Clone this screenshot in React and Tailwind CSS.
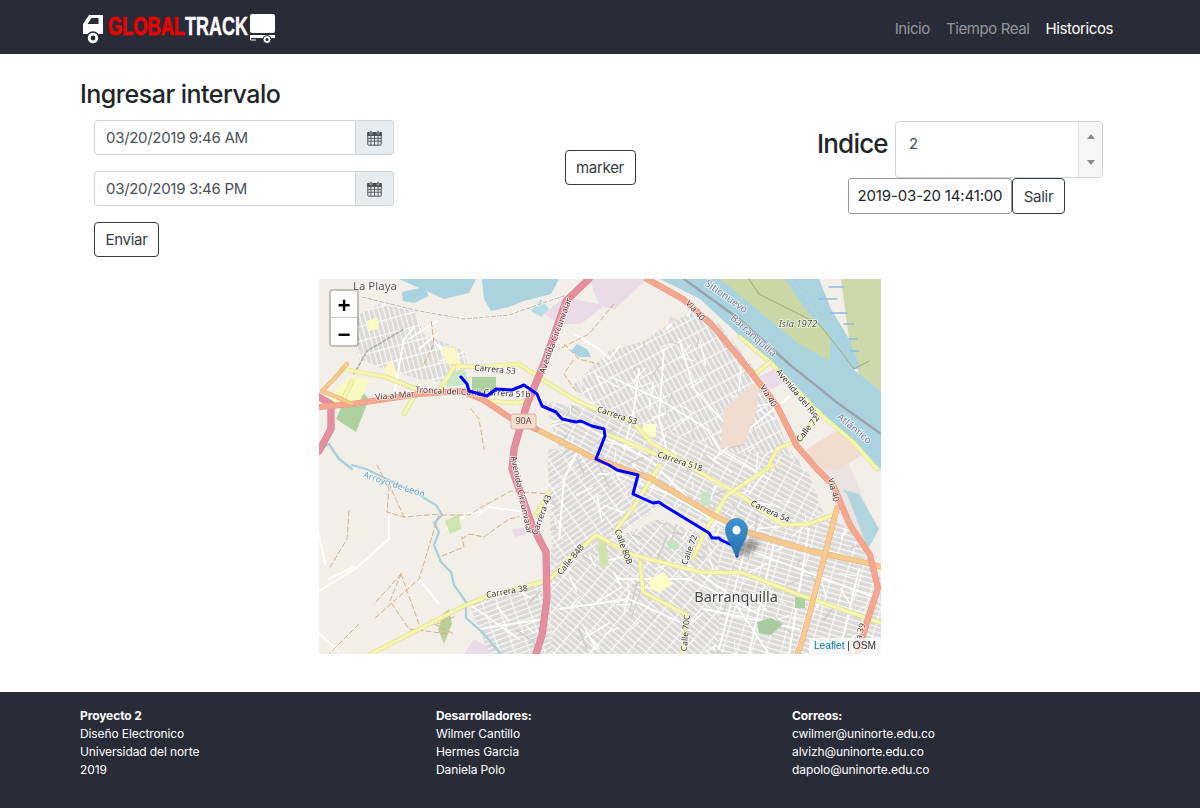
const F = { fontFamily: 'Inter, "Liberation Sans", sans-serif' };

const Line = ({ d, w, c, dash, op }) => (
  <path d={d} fill="none" stroke={c} strokeWidth={w} strokeLinecap="round" strokeLinejoin="round" strokeDasharray={dash} opacity={op} />
);
const Cased = ({ d, w, c, edge }) => (
  <g>
    <Line d={d} w={w + 1.2} c={edge} />
    <Line d={d} w={w} c={c} />
  </g>
);

const districts = [
  ["252,108 290,72 325,62 345,48 378,30 400,45 432,85 445,110 470,170 490,195 440,190 420,175 340,150 290,135", "p60"],
  ["225,122 290,132 340,150 420,175 470,175 490,195 505,235 470,250 420,260 350,230 290,195 240,170", "p28"],
  ["395,250 470,250 510,235 530,250 552,285 562,300 562,375 478,375 400,375 385,300", "p14"],
  ["232,270 290,262 340,240 400,260 400,375 232,375", "p40"],
  ["150,325 175,315 230,300 232,375 170,375", "p-20"],
  ["228,170 260,170 300,200 345,225 290,262 240,290 232,260", "p-35"],
  ["30,40 60,25 95,32 105,55 145,72 150,92 135,105 100,100 70,92 40,80", "p75"],
];

const water = "341,0 381,20 421,57 451,83 501,133 562,190 562,112 534,90 511,57 488,20 471,0";

const route = "M142 98 L148 105 L150 112 L168 117 L177 110 L193 111 L205 106 L218 115 L223 127 L237 133 L243 140 L257 143 L262 142 L273 147 L285 150 L286 157 L277 180 L290 186 L298 191 L319 196 L314 215 L334 224 L340 223 L344 226 L390 254 L393 259 L400 259 L402 261 L417 268 L418 277";

const dashes = [
  "M58 186 L70 210 L68 233 L85 238 L120 235 L100 300 L55 340",
  "M30 232 L28 260 L10 290",
  "M123 236 L150 236 L163 228 L192 212 L230 215",
  "M85 238 L70 205",
  "M143 260 L150 255 L165 258 L190 240 L200 238",
  "M123 277 L145 268 L143 258",
  "M82 295 L55 325 M82 295 L100 345 M82 295 L71 322 L90 350 L130 355",
  "M40 345 L20 365 L10 375",
  "M115 345 L135 355 M135 338 L118 345",
  "M257 112 L245 95 L255 80 M245 65 L260 80 L280 85",
  "M295 25 L270 55 L240 70",
  "M152 130 L160 140 L165 170",
  "M105 85 L115 65 L112 40",
];

const whites = [
  "M43 18 L100 32 L145 40 L190 36 L247 16",
  "M0 312 L36 290 L70 260 L70 236 M35 288 L10 300",
  "M160 236 L170 228 L205 233",
  "M128 250 L150 234 L165 232",
  "M120 65 L135 85 M115 62 L125 75 L140 90",
  "M75 115 L85 60 L95 48",
  "M90 60 L118 42 M100 70 L118 55",
  "M0 255 L6 285",
  "M120 325 L100 300 M0 355 L20 372",
  "M255 55 L280 70 L290 80 L300 68",
  "M292 98 L340 120 L388 150 L400 170 L450 200",
  "M320 90 L315 130 L305 170 M345 70 L340 140 L350 180",
  "M360 60 L375 110 L420 160",
  "M230 130 L270 150 L330 180 L390 240",
  "M298 195 L350 215 L420 255",
  "M260 170 L245 200 L240 260",
  "M360 280 L410 315 L450 375",
  "M300 300 L370 300 L440 335",
  "M395 180 L430 150 L470 118",
  "M448 190 L430 215 M490 250 L470 375 M540 290 L520 375",
  "M400 260 L560 320 M385 330 L480 350 M240 330 L310 320 L365 345",
  "M430 255 L400 370 M455 265 L430 375",
  "M150 325 L200 360 M160 350 L225 340",
];

const yellows = [
  "M23 90 L67 98 L97 110",
  "M137 87 L160 88 L200 85 L227 103 L260 123 L281 132 L314 143 L331 163 L364 183 L394 201 L421 216 L464 246 L490 245 L514 236",
  "M120 112 L135 88",
  "M288 155 L341 177 L381 187",
  "M341 186 L314 229 L298 249 L308 283",
  "M454 186 L408 216 L388 249 L374 279",
  "M501 133 L481 160 L458 170 L448 190",
  "M421 58 L451 83 L501 135 L534 163 L558 190",
  "M436 95 L451 83",
  "M281 259 L314 276 L381 293 L424 294 L481 316 L562 344",
  "M321 283 L324 313 L368 336 L363 376",
  "M50 376 L147 326 L167 318 L230 301 L247 283 L277 256 L290 263",
  "M217 236 L230 213",
  "M168 122 L200 124 L215 118",
  "M33 102 L22 125 M98 112 L85 135",
];

const labels = [
  [176, 91, "Carrera 53", 5, 8.5, "#333"], [76, 117, "Via al Mar", -5, 8.5, "#533"], [132, 113, "Troncal del Caribe", 3, 8.5, "#533"],
  [188, 115, "Carrera 51b", 3, 8.5, "#333"], [237, 57, "Avenida Circunvalar", -70, 8.5, "#533"], [202, 216, "Avenida Circunvalar", 78, 8.5, "#533"],
  [298, 137, "Carrera 53", 18, 8.5, "#333"], [361, 183, "Carrera 518", 18, 8.5, "#333"], [376, 32, "Via 40", 48, 8.5, "#533"],
  [449, 117, "Via 40", 58, 8.5, "#533"], [478, 115, "Avenida del Rio", 50, 8.5, "#333"], [489, 150, "Calle 72", -52, 8.5, "#333"],
  [223, 236, "Carrera 43", -70, 8.5, "#333"], [252, 281, "Calle 84B", -50, 8.5, "#333"], [188, 313, "Carrera 38", -10, 8.5, "#333"],
  [451, 233, "Carrera 54", 25, 8.5, "#333"], [514, 211, "Via 40", 75, 8.5, "#533"], [371, 271, "Calle 72", -70, 8.5, "#333"],
  [304, 268, "Calle 80B", 70, 8.5, "#333"], [367, 354, "Calle 70C", -85, 8.5, "#333"], [541, 356, "Via 39", -75, 8.5, "#533"],
];

// Deterministic street noise that breaks up the regular block patterns.
let seed = 1234;
const rnd = () => {
  seed = (seed * 16807) % 2147483647;
  return seed / 2147483647;
};
const noise = Array.from({ length: 320 }, () => {
  const x = 140 + rnd() * 422;
  const y = 20 + rnd() * 355;
  const a = rnd() * Math.PI;
  const l = 6 + rnd() * 24;
  return {
    d: `M${x.toFixed(1)} ${y.toFixed(1)} L${(x + Math.cos(a) * l).toFixed(1)} ${(y + Math.sin(a) * l).toFixed(1)}`,
    c: rnd() > 0.72 ? "#cfcdca" : "#ffffff",
    w: 0.8 + rnd() * 0.9,
  };
});

function MapSvg() {
  return (
    <svg width="562" height="375" viewBox="0 0 562 375" className="block">
      <defs>
        {[["p60", 62], ["p28", 28], ["p14", 16], ["p40", 40], ["p-20", -20], ["p-35", -35], ["p75", 75]].map(([id, a]) => (
          <pattern key={id} id={id} width="14" height="5" patternUnits="userSpaceOnUse" patternTransform={`rotate(${a})`}>
            <rect width="14" height="5" fill="#dcdad7" />
            <rect y="0" width="14" height="1.2" fill="#fafafa" />
            <rect x="0" width="1.2" height="5" fill="#fafafa" />
          </pattern>
        ))}
        <clipPath id="city">
          {districts.map(([p, id]) => <polygon key={id} points={p} />)}
        </clipPath>
        <filter id="soft" x="0" y="0" width="100%" height="100%"><feGaussianBlur stdDeviation="0.4" /></filter>
        <filter id="shadow" x="-50%" y="-50%" width="200%" height="200%"><feGaussianBlur stdDeviation="2.5" /></filter>
        <linearGradient id="pin" x1="0" x2="0" y1="0" y2="1">
          <stop offset="0" stopColor="#3f93d3" />
          <stop offset="1" stopColor="#2272ad" />
        </linearGradient>
      </defs>
      <g filter="url(#soft)">
        <rect width="562" height="375" fill="#f2efe9" />
        <path d="M225 35 L245 18 L280 25 L296 0 L328 0 L281 30 L262 45 L240 45 Z" fill="#ebdbe8" />
        <path d="M270 0 L328 0 L296 30 L281 28 Z" fill="#ebdbe8" />
        <path d="M351 37 L371 47 L358 58 L348 50 Z M346 60 L365 70 L358 80 L345 70 Z" fill="#ebdbe8" />
        <path d="M500 190 L530 185 L550 232 L534 240 L515 200 Z" fill="#ebe3e2" />
        <path d="M145 375 L155 360 L175 370 L178 375 Z M193 250 L208 248 L208 255 L196 258 Z" fill="#ebdbe8" />
        <path d="M80 0 L157 0 L150 14 L125 20 L112 14 L98 8 Z M163 0 L240 0 L232 15 L205 22 L190 28 L172 32 L165 20 Z M83 13 L105 8 L110 17 L95 24 L84 22 Z" fill="#aad3df" />
        <path d="M252 72 L258 65 L268 70 L272 78 L260 78 Z" fill="#aad3df" />
        <path d="M212 32 L222 20 L230 30 L222 38 Z" fill="#b4dde4" />

        <polygon points="471,0 488,20 511,57 534,90 562,112 562,0" fill="#f2efe9" />
        <path d="M522 0 L562 0 L562 112 L540 95 L530 60 Z" fill="#cdd9ab" />
        <polygon points={water} fill="#aad3df" />
        <path d="M401 0 L466 0 L490 35 L511 57 L511 82 L480 65 L441 33 Z" fill="#c9d8a6" />
        <path d="M471 0 L500 0 L512 30 L530 60 L542 90 L534 90 L511 57 L488 20 Z" fill="#aad3df" />
        <Line d="M430 0 L440 15 L470 30 L500 45 L520 70 L535 90 L550 82" w={1} c="#9aaa77" />
        <Line d="M510 8 L525 8 M500 20 L518 20 M512 34 L528 34 M525 45 L535 45 M530 60 L538 60 M532 72 L540 72" w={1.3} c="#88bfe0" />
        <Line d="M365 0 L420 40 L470 85 L520 125 L562 155" w={2.4} c="#9ba3ad" />
        <path d="M514 208 L540 215 L560 250 L548 272 L535 240 L520 225 Z" fill="#aad3df" opacity="0.9" />
        <path d="M508 195 L528 215 L546 262 L532 255 L515 225 Z" fill="#ebe3e2" />

        {districts.map(([p, id]) => <polygon key={id} points={p} fill={`url(#${id})`} />)}
        <g clipPath="url(#city)">
          {noise.map((n, i) => <Line key={i} d={n.d} w={n.w} c={n.c} />)}
        </g>
        {whites.map((d, i) => <Line key={i} d={d} w={i < 4 ? 2.2 : 1.8} c="#ffffff" />)}
        <Line d="M43 18 L100 32 L145 40 L190 36 L247 16" w={1.2} c="#bdbdbd" dash="4 2" />
        <Line d="M35 95 L48 72 L85 50" w={1.5} c="#aaa" dash="3 2" />

        <path d="M401 170 L405 130 L440 100 L438 130 L425 165 Z" fill="#f1dcd0" />
        <path d="M488 170 L520 150 L545 175 L520 190 L495 190 Z" fill="#f1dcd0" />
        <path d="M436 100 L455 90 L470 100 L450 112 Z" fill="#ebdbe8" />
        <path d="M33 103 L50 120 L37 153 L17 140 Z" fill="#add19e" />
        <rect x="153" y="98" width="24" height="15" fill="#add19e" />
        <path d="M10 118 L30 98 L50 100 L40 125 L15 130 Z" fill="#f7fabf" />
        <path d="M125 95 L145 90 L150 105 L128 108 Z" fill="#c7e7c5" />
        <path d="M122 70 L135 68 L142 85 L128 85 Z M65 90 L72 82 L78 95 L68 100 Z M48 42 L58 38 L60 50 L50 52 Z" fill="#fbf8c3" />
        <path d="M438 343 L452 339 L464 345 L452 356 L440 354 Z" fill="#a9c9a0" />
        <rect x="476" y="318" width="10" height="11" fill="#add19e" />
        <path d="M331 300 L345 293 L354 305 L340 313 L331 310 Z" fill="#fdfbc5" />
        <rect x="324" y="145" width="13" height="13" fill="#fdfbc5" />
        <path d="M278 258 L287 262 L290 287 L281 287 Z M126 242 L140 235 L142 250 L131 255 Z" fill="#cfe3ae" />
        <path d="M445 310 L450 310 L450 320 L445 320 Z M381 215 L390 212 L392 225 L383 228 Z M347 262 L358 262 L360 270 L350 270 Z" fill="#c9e4c2" />
        <path d="M124 335 L130 330 L133 345 L125 365 L119 350 Z" fill="#bcd09a" />

        <Line d="M0 170 L10 165 L20 180 L33 190" w={2.4} c="#a9cfdc" />
        <Line d="M33 186 L47 190 L100 216 L117 226 L123 236 L115 244 L120 253 L115 266 L122 283 L132 293 L135 306 L147 323 L147 339 L163 353 L183 376" w={2.2} c="#a9cfdc" />

        {dashes.map((d, i) => <Line key={i} d={d} w={1} c="#d3b184" dash="5 3" />)}

        {yellows.map((d, i) => <Cased key={i} d={d} w={3.4} c="#f5f7ae" edge="#dedd93" />)}

        <Cased d="M270 0 L247 22 L225 85 L208 125 L195 170 L193 190 L213 246 L227 273 L228 319 L223 356 L217 375" w={6} c="#e58e9e" edge="#d4808f" />
        <Cased d="M0 172 L12 150 L12 125 L0 118" w={6} c="#e58e9e" edge="#d4808f" />
        <Cased d="M217 150 L277 180 L331 199 L394 236 L431 254 L488 271 L548 284 L562 288" w={4.5} c="#f7c98f" edge="#e9b474" />
        <Cased d="M518 229 L504 283 L484 359 L478 376" w={4.5} c="#f8cb95" edge="#e9b474" />
        <Cased d="M0 128 L33 125 L100 115 L143 112 L163 120 L193 140 L217 150" w={5} c="#f5a68e" edge="#e79a82" />
        <Cased d="M33 125 L18 118 L3 112 M3 112 L15 100 L28 85" w={3} c="#f7c98f" edge="#e9b474" />
        <Cased d="M328 0 L364 20 L394 47 L424 83 L458 127 L478 167 L498 190 L514 206 L531 246 L551 276 L559 309 L548 343 L538 376" w={5} c="#f5a68e" edge="#e79a82" />

        <g fontFamily='"Noto Sans", sans-serif' stroke="#ffffff" strokeOpacity="0.75" strokeWidth="1.6" paintOrder="stroke">
          {labels.map(([x, y, t, a, s, c], i) => (
            <text key={i} x={x} y={y} fontSize={s} fill={c} textAnchor="middle" dominantBaseline="middle" transform={`rotate(${a} ${x} ${y})`}>{t}</text>
          ))}
          <text x="56" y="8" fontSize="11.5" fill="#555" textAnchor="middle" dominantBaseline="middle">La Playa</text>
          <text x="417" y="319" fontSize="14.5" fill="#444" textAnchor="middle" dominantBaseline="middle">Barranquilla</text>
          <text x="407" y="18" fontSize="10" fill="#7c7e94" textAnchor="middle" dominantBaseline="middle" transform="rotate(35 407 18)">Sitionuevo</text>
          <text x="434" y="57" fontSize="10" fill="#7c7e94" textAnchor="middle" dominantBaseline="middle" transform="rotate(42 434 57)">Barranquilla</text>
          <text x="535" y="150" fontSize="10" fill="#7c7e94" textAnchor="middle" dominantBaseline="middle" transform="rotate(40 535 150)">Atlántico</text>
          <text x="479" y="45" fontSize="9.5" fontStyle="italic" fill="#4a5a4a" textAnchor="middle" dominantBaseline="middle">Isla 1972</text>
          <text x="75" y="206" fontSize="9" fill="#6a9fc4" textAnchor="middle" dominantBaseline="middle" transform="rotate(18 75 206)">Arroyo de León</text>
        </g>
        <rect x="192" y="135" width="25" height="15" rx="2" fill="#f5dccf" stroke="#d8b4a3" />
        <text x="204.5" y="143" fontSize="9" fontFamily='"Noto Sans", sans-serif' fill="#5c4a44" textAnchor="middle" dominantBaseline="middle">90A</text>
      </g>

      <path d={route} fill="none" stroke="#0000ff" strokeWidth="3" strokeLinejoin="round" strokeLinecap="round" />

      <ellipse cx="428" cy="268" rx="12" ry="7" fill="#000" opacity="0.35" filter="url(#shadow)" transform="rotate(-25 428 268)" />
      <g transform="translate(406 239) scale(0.92 0.97)">
        <path d="M12.5 0.5 C5.6 0.5 0.5 5.9 0.5 12.5 C0.5 20 9.5 32 12.5 41 C15.5 32 24.5 20 24.5 12.5 C24.5 5.9 19.4 0.5 12.5 0.5 Z" fill="url(#pin)" stroke="#2a6f9f" strokeWidth="0.6" />
        <circle cx="12.5" cy="12.5" r="4.4" fill="#fff" />
      </g>
    </svg>
  );
}

function Calendar() {
  return (
    <svg width="15" height="16" viewBox="0 0 15 16" fill="none" stroke="#495057" strokeWidth="1">
      <rect x="0.8" y="2.5" width="13.4" height="12.7" rx="1" />
      <rect x="0.8" y="2.5" width="13.4" height="3" fill="#495057" />
      <path d="M0.8 8.4H14.2M0.8 11.2H14.2M3.9 5.5V15M7.5 5.5V15M11.1 5.5V15" strokeWidth="0.9" />
      <rect x="3" y="0.8" width="2" height="3.4" rx="0.8" fill="#495057" stroke="#e9ecef" strokeWidth="0.5" />
      <rect x="10" y="0.8" width="2" height="3.4" rx="0.8" fill="#495057" stroke="#e9ecef" strokeWidth="0.5" />
    </svg>
  );
}

function DateField({ value }) {
  return (
    <div className="flex h-[35px] w-[300px]">
      <div className="flex flex-1 items-center rounded-l border border-[#ced4da] bg-white pl-[11px] pt-[2px] text-[15px] tracking-[-0.3px] text-[#495057]">{value}</div>
      <div className="flex w-[38px] items-center justify-center rounded-r border border-l-0 border-[#ced4da] bg-[#e9ecef]">
        <Calendar />
      </div>
    </div>
  );
}

function Btn({ children, className = "" }) {
  return (
    <button className={`flex items-center justify-center rounded border border-[#343a40] bg-white pt-[2px] text-[15px] tracking-[-0.3px] text-[#343a40] ${className}`}>
      {children}
    </button>
  );
}

function Logo() {
  return (
    <svg width="194" height="34" viewBox="0 0 194 34" className="block">
      <path d="M6 5 H20 V24 H0 V14 Z" fill="#fff" />
      <path d="M8.5 8 L15.5 8 L15.5 14 L4.5 14 Z" fill="#292b37" />
      <circle cx="10" cy="28" r="6" fill="#fff" stroke="#292b37" strokeWidth="1.5" />
      <circle cx="10" cy="28" r="2.4" fill="#292b37" />
      <rect x="167" y="4" width="25" height="19" rx="2" fill="#fff" />
      <rect x="167" y="25" width="25" height="3" fill="#fff" />
      <path d="M167.5 25 L167.5 30 L173 30" stroke="#fff" fill="none" />
      <circle cx="184" cy="29.5" r="4" fill="#fff" stroke="#292b37" strokeWidth="1" />
      <circle cx="184" cy="29.5" r="1.5" fill="#292b37" />
      <text x="25" y="25" fontFamily='"Liberation Sans", sans-serif' fontWeight="700" fontSize="25" fill="#f00000" stroke="#f00000" strokeWidth="0.7" textLength="77" lengthAdjust="spacingAndGlyphs">GLOBAL</text>
      <text x="102" y="25" fontFamily='"Liberation Sans", sans-serif' fontWeight="700" fontSize="25" fill="#ffffff" stroke="#ffffff" strokeWidth="0.4" textLength="63" lengthAdjust="spacingAndGlyphs">TRACK</text>
    </svg>
  );
}

function FooterCol({ title, lines }) {
  return (
    <div className="text-[12px] leading-[18px] tracking-[-0.1px] text-white">
      <div className="font-bold">{title}</div>
      {lines.map((l) => <div key={l}>{l}</div>)}
    </div>
  );
}

export default function App() {
  return (
    <div className="min-h-[808px] bg-white text-[#212529]" style={F}>
      <nav className="flex h-[54px] items-center justify-between bg-[#292b37] pl-[83px] pr-[87px]">
        <Logo />
        <div className="flex gap-[16px] pt-[4px] text-[15px] tracking-[-0.4px]">
          <a className="text-white/50">Inicio</a>
          <a className="text-white/50">Tiempo Real</a>
          <a className="text-white">Historicos</a>
        </div>
      </nav>

      <main className="px-[80px] pt-[25px]">
        <h2 className="mb-[11px] text-[25px] font-medium leading-[30px] tracking-[-0.5px]">Ingresar intervalo</h2>
        <div className="flex">
          <div className="flex w-[346px] flex-col gap-4 pl-[14px]">
            <DateField value="03/20/2019 9:46 AM" />
            <DateField value="03/20/2019 3:46 PM" />
            <Btn className="h-[35px] w-[65px]">Enviar</Btn>
          </div>
          <div className="flex w-[348px] justify-center pt-[30px]">
            <Btn className="h-[35px] w-[71px]">marker</Btn>
          </div>
          <div className="flex flex-col items-start pt-px">
            <div className="flex items-start">
              <div className="ml-[43px] w-[78px] pt-[5px] text-[26px] font-medium leading-[36px] tracking-[-0.8px]">Indice</div>
              <div className="flex h-[57px] w-[208px] rounded border border-[#ced4da] bg-white">
                <div className="flex-1 pl-[13px] pt-[12px] text-[15px] leading-[20px] text-[#495057]">2</div>
                <div className="flex w-[24px] flex-col items-center justify-between rounded-r border-l border-[#e4e4e4] bg-[#f5f5f5] py-[12px]">
                  <div className="h-0 w-0 border-x-[4px] border-b-[5px] border-x-transparent border-b-[#888]" />
                  <div className="h-0 w-0 border-x-[4px] border-t-[5px] border-x-transparent border-t-[#888]" />
                </div>
              </div>
            </div>
            <div className="ml-[74px] flex">
              <div className="flex h-[36px] w-[164px] items-center justify-center rounded-[3px] border border-[#999] bg-white pt-[1px] text-[15px] tracking-[-0.15px] text-[#212529]">2019-03-20 14:41:00</div>
              <Btn className="h-[36px] w-[53px]">Salir</Btn>
            </div>
          </div>
        </div>

        <div className="relative mx-auto mt-[22px] h-[375px] w-[562px] overflow-hidden">
          <MapSvg />
          <div className="absolute left-[10px] top-[10px] w-[30px] overflow-hidden rounded border-2 border-black/20 bg-clip-padding" style={{ fontFamily: '"Liberation Mono", monospace' }}>
            <div className="flex h-[27px] items-center justify-center border-b border-[#ccc] bg-white pt-[8px] text-[22px] font-bold leading-none text-black">+</div>
            <div className="flex h-[27px] items-center justify-center bg-white pt-[10px] text-[22px] font-bold leading-none text-black">−</div>
          </div>
          <div className="absolute bottom-0 right-0 bg-white/70 px-[5px] text-[10.2px] leading-[16px] text-[#333]" style={{ fontFamily: '"Liberation Sans", sans-serif' }}>
            <a className="text-[#0078a8]">Leaflet</a> | OSM
          </div>
        </div>
      </main>

      <footer className="mt-[38px] grid h-[116px] grid-cols-[356px_356px_1fr] bg-[#292b37] pl-[80px] pt-[15px]">
        <FooterCol title="Proyecto 2" lines={["Diseño Electronico", "Universidad del norte", "2019"]} />
        <FooterCol title="Desarrolladores:" lines={["Wilmer Cantillo", "Hermes Garcia", "Daniela Polo"]} />
        <FooterCol title="Correos:" lines={["cwilmer@uninorte.edu.co", "alvizh@uninorte.edu.co", "dapolo@uninorte.edu.co"]} />
      </footer>
    </div>
  );
}
